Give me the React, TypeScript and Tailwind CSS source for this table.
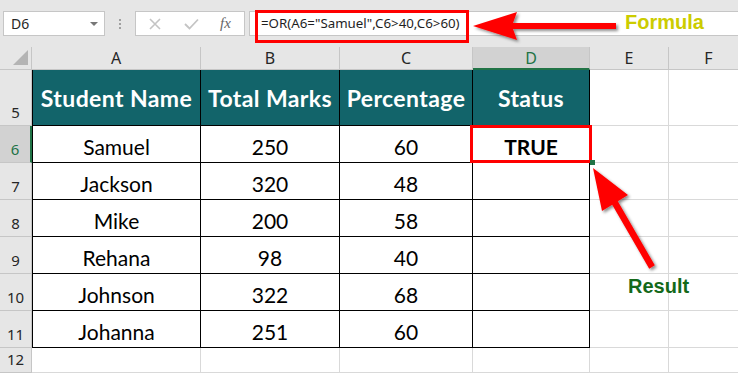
import React from 'react';

type Col = { key: string; w: string };

const cols: Col[] = [
  { key: 'A', w: 'w-[169px]' },
  { key: 'B', w: 'w-[139px]' },
  { key: 'C', w: 'w-[133px]' },
  { key: 'D', w: 'w-[117px]' },
  { key: 'E', w: 'w-[79px]' },
  { key: 'F', w: 'w-[80px]' },
];

const students: [string, number, number][] = [
  ['Samuel', 250, 60],
  ['Jackson', 320, 48],
  ['Mike', 200, 58],
  ['Rehana', 98, 40],
  ['Johnson', 322, 68],
  ['Johanna', 251, 60],
];

const headings = ['Student Name', 'Total Marks', 'Percentage', 'Status'];

const uiFont = "font-['Noto_Sans',sans-serif]";
const cellFont = "font-['Lato',sans-serif]";

// grey row number on the left edge of the sheet
const RowHead: React.FC<{ n: number; active?: boolean }> = ({ n, active }) => (
  <div
    className={`w-[32px] shrink-0 flex items-end justify-center pb-[5px] border-b border-b-[#c6c6c6] text-[15px] leading-none ${uiFont} ${
      active
        ? 'bg-[#d2d2d2] border-r-2 border-r-[#217346] text-[#217346]'
        : 'bg-[#e6e6e6] border-r border-r-[#c6c6c6] text-[#262626]'
    }`}
  >
    {n}
  </div>
);

// empty cell outside the table, light gridlines only
const Blank: React.FC<{ w: string }> = ({ w }) => (
  <div className={`${w} shrink-0 border-r border-b border-[#d9d9d9]`} />
);

const FormulaBar: React.FC = () => (
  <div className="h-[47px] bg-[#e6e6e6] flex items-start pt-[11px] pl-[3px]">
    <div
      className={`w-[102px] h-[25px] bg-white border border-[#c6c6c6] flex items-center justify-between pl-[7px] pr-[6px] text-[14px] text-[#262626] ${uiFont}`}
    >
      <span>D6</span>
      <span className="w-0 h-0 border-l-[4px] border-r-[4px] border-t-[4px] border-l-transparent border-r-transparent border-t-[#777]" />
    </div>
    <div className="w-[30px] h-[25px] flex flex-col items-center justify-center gap-[2px]">
      <span className="w-[2px] h-[2px] bg-[#a0a0a0]" />
      <span className="w-[2px] h-[2px] bg-[#a0a0a0]" />
      <span className="w-[2px] h-[2px] bg-[#a0a0a0]" />
    </div>
    <div className="w-[110px] h-[25px] bg-white border border-[#c6c6c6] flex items-center pl-[12px]">
      <svg width="14" height="14" viewBox="0 0 14 14" className="mr-[22px]">
        <path d="M2 2 L12 12 M12 2 L2 12" stroke="#c4c4c4" strokeWidth="1.6" />
      </svg>
      <svg width="15" height="12" viewBox="0 0 15 12" className="mr-[21px]">
        <path d="M1 6 L5.5 10.5 L14 1.5" stroke="#c4c4c4" strokeWidth="1.8" fill="none" />
      </svg>
      <span className="italic text-[15px] text-[#666] font-['Liberation_Serif',serif] leading-none">
        fx
      </span>
    </div>
    <div
      className={`ml-[4px] flex-1 h-[25px] bg-white border border-r-0 border-[#c6c6c6] flex items-center pl-[11px] text-[13.3px] text-[#1f1f1f] ${uiFont}`}
    >
      =OR(A6="Samuel",C6&gt;40,C6&gt;60)
    </div>
  </div>
);

const ColumnHeads: React.FC = () => (
  <div className="flex h-[23px]">
    <div className="w-[32px] shrink-0 bg-[#e6e6e6] border-r border-b border-[#c6c6c6] relative">
      <svg width="32" height="22" viewBox="0 0 32 22" className="absolute inset-0">
        <polygon points="13,18 28,18 28,3" fill="#b4b4b4" />
      </svg>
    </div>
    {cols.map((c) => (
      <div
        key={c.key}
        className={`${c.w} shrink-0 flex items-center justify-center text-[16px] leading-none ${uiFont} border-r border-r-[#c6c6c6] ${
          c.key === 'D'
            ? 'bg-[#d2d2d2] border-b-2 border-b-[#217346] text-[#217346]'
            : 'bg-[#e6e6e6] border-b border-b-[#c6c6c6] text-[#262626]'
        }`}
      >
        {c.key}
      </div>
    ))}
  </div>
);

const App: React.FC = () => {
  return (
    <div className="w-[738px] h-[373px] overflow-hidden bg-white relative">
      <FormulaBar />
      <ColumnHeads />

      {/* header row of the table */}
      <div className="flex h-[56px]">
        <RowHead n={5} />
        {headings.map((h, i) => (
          <div
            key={h}
            className={`${cols[i].w} shrink-0 bg-[#12646a] border-r border-b border-black ${
              i === 0 ? 'border-l' : ''
            } flex items-center justify-center pt-[2px] text-white font-bold text-[23px] tracking-[0.4px] whitespace-nowrap ${cellFont}`}
          >
            {h}
          </div>
        ))}
        <Blank w={cols[4].w} />
        <Blank w={cols[5].w} />
      </div>

      {students.map(([name, marks, pct], r) => (
        <div key={name} className="flex h-[37px]">
          <RowHead n={r + 6} active={r === 0} />
          {[name, marks, pct, r === 0 ? 'TRUE' : ''].map((v, i) => (
            <div
              key={i}
              className={`${cols[i].w} shrink-0 border-r border-b border-black ${
                i === 0 ? 'border-l' : ''
              } flex items-end justify-center pb-[3px] text-[21px] leading-[24px] text-black ${cellFont} ${
                i === 3 ? 'font-bold' : ''
              }`}
            >
              {v}
            </div>
          ))}
          <Blank w={cols[4].w} />
          <Blank w={cols[5].w} />
        </div>
      ))}

      <div className="flex h-[25px]">
        <RowHead n={12} />
        {cols.map((c) => (
          <Blank key={c.key} w={c.w} />
        ))}
      </div>

      {/* callouts drawn over the sheet */}
      <div className="absolute left-[255px] top-[10px] w-[214px] h-[33px] border-[3px] border-[#ff0000]" />
      <div className="absolute left-[470px] top-[125px] w-[122px] h-[38px] border-[3px] border-[#ff0000]" />
      <div className="absolute left-[590px] top-[160px] w-[5px] h-[5px] bg-[#217346]" />

      <svg width="738" height="373" viewBox="0 0 738 373" className="absolute inset-0 pointer-events-none">
        <defs>
          <filter id="drop" x="-20%" y="-20%" width="140%" height="140%">
            <feDropShadow dx="2" dy="2" stdDeviation="1.5" floodColor="#000" floodOpacity="0.45" />
          </filter>
        </defs>
        <polygon
          points="473,26 517,12 513,23 616,23 616,29 513,29 517,40"
          fill="#ff0000"
          filter="url(#drop)"
        />
        <polygon
          points="593,168 628,195 617.8,201.3 654.8,265.3 649.2,268.7 612.2,204.7 602,211"
          fill="#ff0000"
          filter="url(#drop)"
        />
      </svg>

      <div className="absolute left-[625px] top-[12px] text-[20px] font-bold text-[#cccc00] font-['Liberation_Sans',sans-serif] leading-none">
        Formula
      </div>
      <div className="absolute left-[628px] top-[276px] text-[20px] font-bold text-[#14691a] font-['Liberation_Sans',sans-serif] leading-none">
        Result
      </div>
    </div>
  );
};

export default App;
